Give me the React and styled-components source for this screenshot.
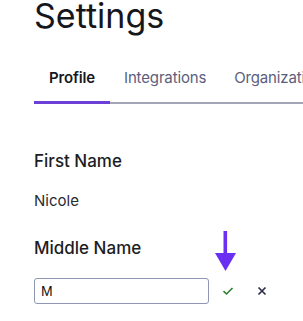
import React from "react";
import styled, { createGlobalStyle } from "styled-components";

const Global = createGlobalStyle`
  html, body { margin: 0; padding: 0; background: #fff; }
  body { font-family: Inter, "Noto Sans", sans-serif; color: #1d1d24; }
`;

const Page = styled.div`
  position: relative;
  width: 303px;
  height: 321px;
  overflow: hidden;
  padding-left: 34px;
  box-sizing: border-box;
`;

const Title = styled.h1`
  margin: 0;
  font-size: 34px;
  line-height: 32px;
  font-weight: 400;
  color: #16161d;
  white-space: nowrap;
`;

const Tabs = styled.div`
  display: flex;
  margin-top: 36px;
  border-bottom: 2px solid #a3a5b8;
  margin-right: -40px;
  white-space: nowrap;
`;

const Tab = styled.div`
  padding: 0 ${(p) => (p.$active ? 15 : 14)}px 13px;
  font-size: 15px;
  line-height: 20px;
  letter-spacing: -0.15px;
  font-weight: ${(p) => (p.$active ? 600 : 400)};
  color: ${(p) => (p.$active ? "#17171f" : "#5b5e7c")};
  border-bottom: 3px solid ${(p) => (p.$active ? "#6c3fd6" : "transparent")};
  margin-bottom: -2px;
`;

const Field = styled.div`
  display: flex;
  flex-direction: column;
`;

const Label = styled.div`
  font-size: 17px;
  line-height: 20px;
  font-weight: 500;
  color: #1d1d24;
  margin-top: ${(p) => p.$top}px;
`;

const Value = styled.div`
  font-size: 15px;
  line-height: 20px;
  color: #2a2a33;
  margin-top: 20px;
`;

const EditRow = styled.div`
  display: flex;
  align-items: center;
  margin-top: 20px;
`;

const Input = styled.input`
  width: 175px;
  height: 26px;
  box-sizing: border-box;
  border: 1px solid #8f95b5;
  border-radius: 3px;
  padding: 0 6px;
  font-family: "Liberation Sans", Arial, sans-serif;
  font-size: 14px;
  color: #111;
  outline: none;
`;

const IconButton = styled.button`
  border: 0;
  background: none;
  padding: 0;
  display: flex;
  align-items: center;
  justify-content: center;
  margin-left: ${(p) => p.$ml}px;
`;

const Arrow = styled.svg`
  position: absolute;
  left: 215px;
  top: 231px;
`;

export default function App() {
  return (
    <>
      <Global />
      <Page>
        <Title>Settings</Title>
        <Tabs>
          <Tab $active>Profile</Tab>
          <Tab>Integrations</Tab>
          <Tab>Organization</Tab>
        </Tabs>
        <Field>
          <Label $top={47}>First Name</Label>
          <Value>Nicole</Value>
        </Field>
        <Field>
          <Label $top={27}>Middle Name</Label>
          <EditRow>
            <Input defaultValue="M" />
            <IconButton $ml={13}>
              <svg width="12" height="10" viewBox="0 0 12 10">
                <path d="M1.5 5.2 L4.5 8 L10.5 2" fill="none" stroke="#2f7d32" strokeWidth="1.6" />
              </svg>
            </IconButton>
            <IconButton $ml={23}>
              <svg width="10" height="10" viewBox="0 0 10 10">
                <path d="M1.5 1.5 L8.5 8.5 M8.5 1.5 L1.5 8.5" fill="none" stroke="#2e2f4c" strokeWidth="1.7" />
              </svg>
            </IconButton>
          </EditRow>
        </Field>
        <Arrow width="21" height="41" viewBox="0 0 21 41">
          <rect x="8.5" y="0" width="3.6" height="24" fill="#6a2ff0" />
          <polygon points="0,22 21,22 10.5,40" fill="#6a2ff0" />
        </Arrow>
      </Page>
    </>
  );
}
